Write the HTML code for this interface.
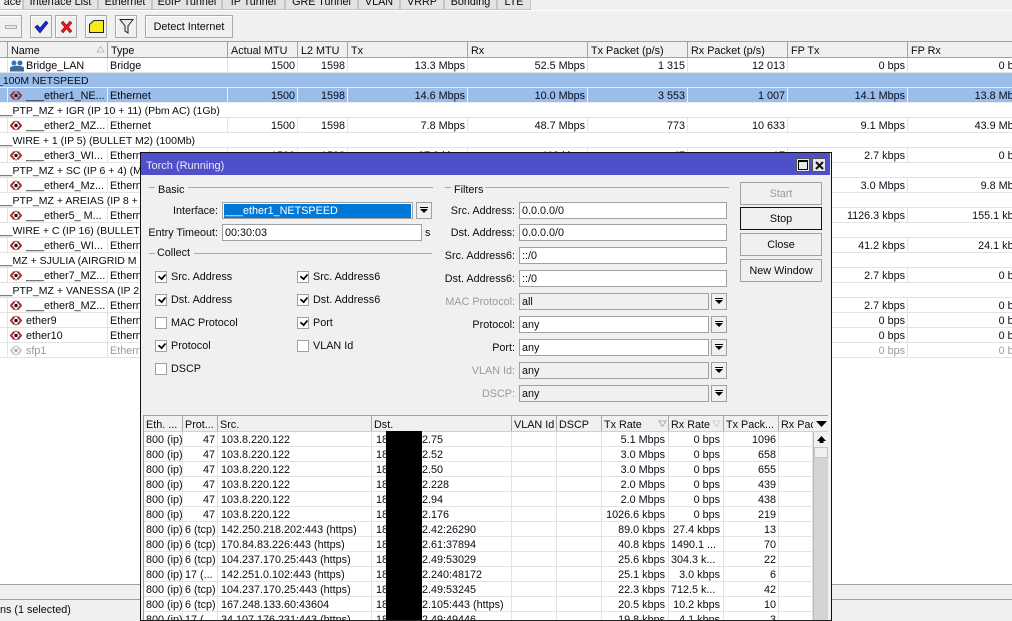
<!DOCTYPE html>
<html><head><meta charset="utf-8"><title>Torch</title>
<style>
html,body{margin:0;padding:0;width:1012px;height:621px;overflow:hidden;background:#fff}
body{font:10.8px/15px "Liberation Sans",sans-serif;color:#0a0a14;position:relative}
div,span,i,svg{box-sizing:border-box}
.a{position:absolute}
.tabs{position:absolute;left:0;top:0;width:1012px;height:11px;background:#f0f0f0;border-bottom:1px solid #fff}
.tab{position:absolute;top:-4px;height:14px;background:#e3e3e3;border:1px solid #c4c4c4;text-align:center;line-height:10px;white-space:nowrap}
.tb{position:absolute;left:0;top:11px;width:1012px;height:31px;background:#f0f0f0}
.btn{position:absolute;top:4px;height:23px;background:#f0f0f0;border:1px solid #a8a8a8;box-shadow:inset 1px 1px 0 #fff;text-align:center;line-height:22px}
.hd{position:absolute;left:0;top:41px;width:1012px;height:17px;background:#f0f0f0;border-top:1px solid #a0a0a0;border-bottom:1px solid #a0a0a0}
.hd span{position:absolute;top:0;height:15px;padding-left:3px;border-left:1px solid #a0a0a0;white-space:nowrap;overflow:hidden;line-height:18px}
.r{position:absolute;left:0;width:1060px;height:15px;border-bottom:1px solid #e3e3e3}
.r i{position:absolute;top:0;height:14px;font-style:normal;border-right:1px solid #e3e3e3;white-space:nowrap;overflow:hidden;text-align:right;line-height:17px;padding-right:2px}
.r i:nth-child(1){left:0;width:8px}
.r i:nth-child(2){left:8px;width:100px;text-align:left;padding-left:18px;overflow:hidden}
.r i:nth-child(3){left:108px;width:120px;text-align:left;padding-left:2px}
.r i:nth-child(4){left:228px;width:70px}
.r i:nth-child(5){left:298px;width:50px}
.r i:nth-child(6){left:348px;width:120px}
.r i:nth-child(7){left:468px;width:120px}
.r i:nth-child(8){left:588px;width:100px}
.r i:nth-child(9){left:688px;width:100px}
.r i:nth-child(10){left:788px;width:120px}
.r i:nth-child(11){left:908px;width:120px}
.r svg{position:absolute;left:2px;top:2px}
.c{position:absolute;left:0;width:1012px;height:15px;border-bottom:1px solid #e3e3e3;white-space:nowrap;line-height:17px;font-size:10.5px}
.c span{position:absolute;left:-5px}
.sel,.sel i{background:#9bbde9;border-color:#e8eef8}
.dim{color:#9a9a9a}
.win{position:absolute;left:140px;top:152px;width:692px;height:480px;background:#f0f0f0;border:1.5px solid #111}
.title{position:absolute;left:141px;top:153px;width:689px;height:22px;background:#4f50c9;color:#e8e8f8;font-size:11px;line-height:26px;padding-left:5px}
.wb{position:absolute;top:158px;width:14px;height:14px;background:#e8e8e8;border:1px solid #555}
.lab{position:absolute;text-align:right;white-space:nowrap;line-height:18px}
.gl{position:absolute;height:1px;background:#a8a8a8}
.gt{position:absolute;line-height:17px}
.in{position:absolute;height:17px;background:#fff;border:1px solid #a0a0a0;padding-left:2px;line-height:17px;white-space:nowrap}
.in.g{background:#f0f0f0}
.dd{position:absolute;left:711px;width:16px;height:17px;background:#f0f0f0;border:1px solid #a0a0a0}
.dd:after{content:"";position:absolute;left:3px;top:4px;width:8px;height:1px;background:#000}
.dd:before{content:"";position:absolute;left:3px;top:6px;width:0;height:0;border:4px solid transparent;border-top:4px solid #000;border-bottom:0}
.cb{position:absolute;width:12px;height:12px;background:#fff;border:1px solid #a0a0a0}
.cb.k:after{content:"";position:absolute;left:2px;top:1px;width:6px;height:4px;border-left:2px solid #000;border-bottom:2px solid #000;transform:rotate(-50deg) scale(.85)}
.cl{position:absolute;white-space:nowrap;line-height:17px}
.bt{position:absolute;left:740px;width:82px;height:23px;background:#f0f0f0;border:1px solid #a0a0a0;text-align:center;line-height:23px}
.list{position:absolute;left:143px;top:415px;width:685px;height:205px;overflow:hidden;background:#fff;border-top:1px solid #a0a0a0;border-left:1px solid #a0a0a0}
.lh{position:absolute;left:0;top:0;width:684px;height:16px;background:#f0f0f0;border-bottom:1px solid #d0d0d0}
.lh span{position:absolute;top:0;height:15px;border-right:1px solid #a8a8a8;padding-left:2px;white-space:nowrap;overflow:hidden;line-height:18px}
.t{position:absolute;left:0;width:669px;height:15px;border-bottom:1px solid #e3e3e3}
.t i{position:absolute;top:0;height:14px;font-style:normal;border-right:1px solid #e3e3e3;white-space:nowrap;overflow:hidden;line-height:16px}
.t i:nth-child(1){left:0;width:39px;padding-left:2px}
.t i:nth-child(2){left:39px;width:35px;padding-left:2px}
.t i:nth-child(3){left:74px;width:154px;padding-left:3px}
.t i:nth-child(4){left:228px;width:140px;padding-left:4px}
.t i:nth-child(5){left:368px;width:45px}
.t i:nth-child(6){left:413px;width:45px}
.t i:nth-child(7){left:458px;width:67px;text-align:right;padding-right:3px}
.t i:nth-child(8){left:525px;width:55px;text-align:right;padding-right:3px}
.t i:nth-child(9){left:580px;width:55px;text-align:right;padding-right:2px}
.t i:nth-child(10){left:635px;width:34px}
.t i.x{text-align:left;padding-left:2px}
.t i u{position:absolute;left:50px;text-decoration:none}
.t i.p{text-align:right;padding-right:2px}
</style></head><body>
<svg width="0" height="0" style="position:absolute"><defs>
<g id="eth"><path d="M4.500 1.500 1 5.500 4.500 9.500M7.500 1.500 11 5.500 7.500 9.500" fill="none" stroke="#ad2a32" stroke-width="2"/><circle cx="6" cy="5.500" r="1.700" fill="#1a1a1a"/><path d="M6 0 7.500 2H4.500ZM6 11 4.500 9H7.500Z" fill="#8d8d8d"/></g>
<g id="ethd"><path d="M4.500 1.500 1 5.500 4.500 9.500M7.500 1.500 11 5.500 7.500 9.500" fill="none" stroke="#c9c9c9" stroke-width="2"/><circle cx="6" cy="5.500" r="1.700" fill="#aaa"/><path d="M6 0 7.500 2H4.500ZM6 11 4.500 9H7.500Z" fill="#ccc"/></g>
</defs></svg>

<div class="tabs">
<div class="tab" style="left:-30px;width:53px;background:#f0f0f0;padding-left:32px">ace</div>
<div class="tab" style="left:23px;width:75px">Interface List</div>
<div class="tab" style="left:98px;width:54px">Ethernet</div>
<div class="tab" style="left:152px;width:70px">EoIP Tunnel</div>
<div class="tab" style="left:222px;width:63px">IP Tunnel</div>
<div class="tab" style="left:285px;width:73px">GRE Tunnel</div>
<div class="tab" style="left:358px;width:42px">VLAN</div>
<div class="tab" style="left:400px;width:44px">VRRP</div>
<div class="tab" style="left:444px;width:53px">Bonding</div>
<div class="tab" style="left:497px;width:34px">LTE</div>
</div>

<div class="tb">
<div class="btn" style="left:-2px;width:24px"><span class="a" style="left:6px;top:9px;width:12px;height:4px;background:#e8e8e8;border:1px solid #b0b0b0"></span></div>
<div class="btn" style="left:30px;width:22px"><svg class="a" style="left:3px;top:4px" width="15" height="14" viewBox="0 0 15 14"><path d="M1 7 3.500 5 6 8 12 1 14 3 6 13Z" fill="#1a28d8" stroke="#0a1070" stroke-width=".6"/></svg></div>
<div class="btn" style="left:55px;width:22px"><svg class="a" style="left:4px;top:4px" width="13" height="14" viewBox="0 0 13 14"><path d="M1 3 3 1 6.500 5 10 1 12 3 8.500 7 12 11 10 13 6.500 9 3 13 1 11 4.500 7Z" fill="#e01818" stroke="#701010" stroke-width=".5"/></svg></div>
<div class="btn" style="left:85px;width:22px"><svg class="a" style="left:3px;top:4px" width="15" height="13" viewBox="0 0 15 13"><path d="M.5 4.500 5 .5H14.500V12.500H.5Z" fill="#f6ec1c" stroke="#222"/></svg></div>
<div class="btn" style="left:115px;width:22px"><svg class="a" style="left:3px;top:2px" width="15" height="17" viewBox="0 0 15 17"><path d="M1 1.500H14L9 8V15L6 13V8Z" fill="#e8e8f0" stroke="#222"/></svg></div>
<div class="btn" style="left:145px;width:88px">Detect Internet</div>
</div>

<div class="hd">
<span style="left:7px;width:100px">Name<svg class="a" style="left:88px;top:4px" width="9" height="7"><path d="M4.500 .5 8 6H1Z" fill="#f4f4f4" stroke="#bbb"/></svg></span>
<span style="left:107px;width:120px">Type</span>
<span style="left:227px;width:70px">Actual MTU</span>
<span style="left:297px;width:50px">L2 MTU</span>
<span style="left:347px;width:120px">Tx</span>
<span style="left:467px;width:120px">Rx</span>
<span style="left:587px;width:100px">Tx Packet (p/s)</span>
<span style="left:687px;width:100px">Rx Packet (p/s)</span>
<span style="left:787px;width:120px">FP Tx</span>
<span style="left:907px;width:105px">FP Rx</span>
</div>

<div class="r" style="top:58px"><i></i><i><svg width="14" height="12" viewBox="0 0 14 12"><circle cx="4" cy="3" r="2.500" fill="#3f73ae"/><circle cx="10" cy="3" r="2.500" fill="#3b6ca8"/><path d="M0 11.500V8C0 5 14 5 14 8V11.500Z" fill="#3a6ba6"/></svg>Bridge_LAN</i><i>Bridge</i><i>1500</i><i>1598</i><i>13.3 Mbps</i><i>52.5 Mbps</i><i>1 315</i><i>12 013</i><i>0 bps</i><i>0 bps</i></div>
<div class="c sel" style="top:73px;width:1012px"><span style="left:-3px">_100M NETSPEED</span></div>
<div class="r sel" style="top:88px"><i></i><i><svg width="12" height="11"><use href="#eth"/></svg>___ether1_NE...</i><i>Ethernet</i><i>1500</i><i>1598</i><i>14.6 Mbps</i><i>10.0 Mbps</i><i>3 553</i><i>1 007</i><i>14.1 Mbps</i><i>13.8 Mbps</i></div>
<div class="c" style="top:103px"><span>___PTP_MZ + IGR (IP 10 + 11) (Pbm AC) (1Gb)</span></div>
<div class="r" style="top:118px"><i></i><i><svg width="12" height="11"><use href="#eth"/></svg>___ether2_MZ...</i><i>Ethernet</i><i>1500</i><i>1598</i><i>7.8 Mbps</i><i>48.7 Mbps</i><i>773</i><i>10 633</i><i>9.1 Mbps</i><i>43.9 Mbps</i></div>
<div class="c" style="top:133px"><span>___WIRE + 1 (IP 5) (BULLET M2) (100Mb)</span></div>
<div class="r" style="top:148px"><i></i><i><svg width="12" height="11"><use href="#eth"/></svg>___ether3_WI...</i><i>Ethernet</i><i>1500</i><i>1598</i><i>27.9 kbps</i><i>112 kbps</i><i>47</i><i>17</i><i>2.7 kbps</i><i>0 bps</i></div>
<div class="c" style="top:163px"><span>___PTP_MZ + SC (IP 6 + 4) (M</span></div>
<div class="r" style="top:178px"><i></i><i><svg width="12" height="11"><use href="#eth"/></svg>___ether4_Mz...</i><i>Ethernet</i><i></i><i></i><i></i><i></i><i></i><i></i><i>3.0 Mbps</i><i>9.8 Mbps</i></div>
<div class="c" style="top:193px"><span>___PTP_MZ + AREIAS (IP 8 +</span></div>
<div class="r" style="top:208px"><i></i><i><svg width="12" height="11"><use href="#eth"/></svg>___ether5_ M...</i><i>Ethernet</i><i></i><i></i><i></i><i></i><i></i><i></i><i>1126.3 kbps</i><i>155.1 kbps</i></div>
<div class="c" style="top:223px"><span>___WIRE + C (IP 16) (BULLET</span></div>
<div class="r" style="top:238px"><i></i><i><svg width="12" height="11"><use href="#eth"/></svg>___ether6_WI...</i><i>Ethernet</i><i></i><i></i><i></i><i></i><i></i><i></i><i>41.2 kbps</i><i>24.1 kbps</i></div>
<div class="c" style="top:253px"><span>___MZ + SJULIA (AIRGRID M</span></div>
<div class="r" style="top:268px"><i></i><i><svg width="12" height="11"><use href="#eth"/></svg>___ether7_MZ...</i><i>Ethernet</i><i></i><i></i><i></i><i></i><i></i><i></i><i>2.7 kbps</i><i>0 bps</i></div>
<div class="c" style="top:283px"><span>___PTP_MZ + VANESSA (IP 2</span></div>
<div class="r" style="top:298px"><i></i><i><svg width="12" height="11"><use href="#eth"/></svg>___ether8_MZ...</i><i>Ethernet</i><i></i><i></i><i></i><i></i><i></i><i></i><i>2.7 kbps</i><i>0 bps</i></div>
<div class="r" style="top:313px"><i></i><i><svg width="12" height="11"><use href="#eth"/></svg>ether9</i><i>Ethernet</i><i></i><i></i><i></i><i></i><i></i><i></i><i>0 bps</i><i>0 bps</i></div>
<div class="r" style="top:328px"><i></i><i><svg width="12" height="11"><use href="#eth"/></svg>ether10</i><i>Ethernet</i><i></i><i></i><i></i><i></i><i></i><i></i><i>0 bps</i><i>0 bps</i></div>
<div class="r dim" style="top:343px"><i></i><i><svg width="12" height="11"><use href="#ethd"/></svg>sfp1</i><i>Ethernet</i><i></i><i></i><i></i><i></i><i></i><i></i><i>0 bps</i><i>0 bps</i></div>

<div class="a" style="left:0;top:584px;width:1012px;height:37px;background:#f0f0f0;border-top:1px solid #a0a0a0"></div>
<div class="a" style="left:0;top:599px;width:1012px;height:1px;background:#a0a0a0"></div>
<div class="a" style="left:0;top:603px;white-space:nowrap">ns (1 selected)</div>

<div class="win"></div>
<div class="title">Torch (Running)</div>
<div class="wb" style="left:796px"><span class="a" style="left:1px;top:1px;width:10px;height:10px;border:1px solid #000;border-top-width:2px"></span></div>
<div class="wb" style="left:812px"><svg class="a" style="left:2px;top:2px" width="9" height="9"><path d="M1 1 8 8M8 1 1 8" stroke="#111" stroke-width="2"/></svg></div>

<div class="gl" style="left:149px;top:187px;width:6px"></div><div class="gt" style="left:158px;top:182px">Basic</div><div class="gl" style="left:188px;top:187px;width:245px"></div>
<div class="lab" style="left:160px;top:202px;width:58px">Interface:</div>
<div class="in" style="left:222px;top:202px;width:191px;padding:1px"><div style="background:#0078d7;color:#fff;height:14px;line-height:15px;padding-left:1px">___ether1_NETSPEED</div></div>
<div class="dd" style="left:416px;top:202px"></div>
<div class="lab" style="left:148px;top:224px;width:70px">Entry Timeout:</div>
<div class="in" style="left:222px;top:224px;width:200px">00:30:03</div>
<div class="gt" style="left:425px;top:225px">s</div>
<div class="gl" style="left:149px;top:253px;width:6px"></div><div class="gt" style="left:157px;top:245px">Collect</div><div class="gl" style="left:194px;top:253px;width:238px"></div>

<div class="cb k" style="left:155px;top:271px"></div><div class="cl" style="left:171px;top:269px">Src. Address</div>
<div class="cb k" style="left:297px;top:271px"></div><div class="cl" style="left:313px;top:269px">Src. Address6</div>
<div class="cb k" style="left:155px;top:294px"></div><div class="cl" style="left:171px;top:292px">Dst. Address</div>
<div class="cb k" style="left:297px;top:294px"></div><div class="cl" style="left:313px;top:292px">Dst. Address6</div>
<div class="cb" style="left:155px;top:317px"></div><div class="cl" style="left:171px;top:315px">MAC Protocol</div>
<div class="cb k" style="left:297px;top:317px"></div><div class="cl" style="left:313px;top:315px">Port</div>
<div class="cb k" style="left:155px;top:340px"></div><div class="cl" style="left:171px;top:338px">Protocol</div>
<div class="cb" style="left:297px;top:340px"></div><div class="cl" style="left:313px;top:338px">VLAN Id</div>
<div class="cb" style="left:155px;top:363px"></div><div class="cl" style="left:171px;top:361px">DSCP</div>

<div class="gl" style="left:445px;top:187px;width:6px"></div><div class="gt" style="left:454px;top:182px">Filters</div><div class="gl" style="left:485px;top:187px;width:244px"></div>
<div class="lab" style="left:430px;top:202px;width:85px">Src. Address:</div><div class="in" style="left:519px;top:202px;width:208px">0.0.0.0/0</div>
<div class="lab" style="left:430px;top:224px;width:85px">Dst. Address:</div><div class="in" style="left:519px;top:224px;width:208px">0.0.0.0/0</div>
<div class="lab" style="left:430px;top:247px;width:85px">Src. Address6:</div><div class="in" style="left:519px;top:247px;width:208px">::/0</div>
<div class="lab" style="left:430px;top:270px;width:85px">Dst. Address6:</div><div class="in" style="left:519px;top:270px;width:208px">::/0</div>
<div class="lab dim" style="left:430px;top:293px;width:85px">MAC Protocol:</div><div class="in g" style="left:519px;top:293px;width:190px">all</div><div class="dd" style="top:293px"></div>
<div class="lab" style="left:430px;top:316px;width:85px">Protocol:</div><div class="in" style="left:519px;top:316px;width:190px">any</div><div class="dd" style="top:316px"></div>
<div class="lab" style="left:430px;top:339px;width:85px">Port:</div><div class="in" style="left:519px;top:339px;width:190px">any</div><div class="dd" style="top:339px"></div>
<div class="lab dim" style="left:430px;top:362px;width:85px">VLAN Id:</div><div class="in g" style="left:519px;top:362px;width:190px">any</div><div class="dd" style="top:362px"></div>
<div class="lab dim" style="left:430px;top:385px;width:85px">DSCP:</div><div class="in g" style="left:519px;top:385px;width:190px">any</div><div class="dd" style="top:385px"></div>

<div class="bt dim" style="top:182px">Start</div>
<div class="bt" style="top:207px;border-color:#111;border-width:1.5px">Stop</div>
<div class="bt" style="top:233px">Close</div>
<div class="bt" style="top:259px">New Window</div>

<div class="list">
<div class="lh">
<span style="left:0;width:39px">Eth. ...</span><span style="left:39px;width:35px">Prot...</span><span style="left:74px;width:154px">Src.</span><span style="left:228px;width:140px">Dst.</span><span style="left:368px;width:45px">VLAN Id</span><span style="left:413px;width:45px">DSCP</span><span style="left:458px;width:67px">Tx Rate<svg class="a" style="left:56px;top:4px" width="9" height="7"><path d="M4.500 6.500 8 1H1Z" fill="#f4f4f4" stroke="#aaa"/></svg></span><span style="left:525px;width:55px">Rx Rate<svg class="a" style="left:43px;top:4px" width="9" height="7"><path d="M4.500 6.500 8 1H1Z" fill="#f4f4f4" stroke="#ccc"/></svg></span><span style="left:580px;width:55px">Tx Pack...</span><span style="left:635px;width:34px;border-right:0">Rx Pac</span>
<svg class="a" style="left:672px;top:5px" width="11" height="6"><path d="M0 0H11L5.500 6Z" fill="#000"/></svg>
</div>
<div class="t" style="top:16px"><i>800 (ip)</i><i class="p">47</i><i>103.8.220.122</i><i>18<u>2.75</u></i><i></i><i></i><i>5.1 Mbps</i><i>0 bps</i><i>1096</i><i></i></div>
<div class="t" style="top:31px"><i>800 (ip)</i><i class="p">47</i><i>103.8.220.122</i><i>18<u>2.52</u></i><i></i><i></i><i>3.0 Mbps</i><i>0 bps</i><i>658</i><i></i></div>
<div class="t" style="top:46px"><i>800 (ip)</i><i class="p">47</i><i>103.8.220.122</i><i>18<u>2.50</u></i><i></i><i></i><i>3.0 Mbps</i><i>0 bps</i><i>655</i><i></i></div>
<div class="t" style="top:61px"><i>800 (ip)</i><i class="p">47</i><i>103.8.220.122</i><i>18<u>2.228</u></i><i></i><i></i><i>2.0 Mbps</i><i>0 bps</i><i>439</i><i></i></div>
<div class="t" style="top:76px"><i>800 (ip)</i><i class="p">47</i><i>103.8.220.122</i><i>18<u>2.94</u></i><i></i><i></i><i>2.0 Mbps</i><i>0 bps</i><i>438</i><i></i></div>
<div class="t" style="top:91px"><i>800 (ip)</i><i class="p">47</i><i>103.8.220.122</i><i>18<u>2.176</u></i><i></i><i></i><i>1026.6 kbps</i><i>0 bps</i><i>219</i><i></i></div>
<div class="t" style="top:106px"><i>800 (ip)</i><i>6 (tcp)</i><i>142.250.218.202:443 (https)</i><i>18<u>2.42:26290</u></i><i></i><i></i><i>89.0 kbps</i><i>27.4 kbps</i><i>13</i><i></i></div>
<div class="t" style="top:121px"><i>800 (ip)</i><i>6 (tcp)</i><i>170.84.83.226:443 (https)</i><i>18<u>2.61:37894</u></i><i></i><i></i><i>40.8 kbps</i><i class="x">1490.1 ...</i><i>70</i><i></i></div>
<div class="t" style="top:136px"><i>800 (ip)</i><i>6 (tcp)</i><i>104.237.170.25:443 (https)</i><i>18<u>2.49:53029</u></i><i></i><i></i><i>25.6 kbps</i><i class="x">304.3 k...</i><i>22</i><i></i></div>
<div class="t" style="top:151px"><i>800 (ip)</i><i>17 (...</i><i>142.251.0.102:443 (https)</i><i>18<u>2.240:48172</u></i><i></i><i></i><i>25.1 kbps</i><i>3.0 kbps</i><i>6</i><i></i></div>
<div class="t" style="top:166px"><i>800 (ip)</i><i>6 (tcp)</i><i>104.237.170.25:443 (https)</i><i>18<u>2.49:53245</u></i><i></i><i></i><i>22.3 kbps</i><i class="x">712.5 k...</i><i>42</i><i></i></div>
<div class="t" style="top:181px"><i>800 (ip)</i><i>6 (tcp)</i><i>167.248.133.60:43604</i><i>18<u>2.105:443 (https)</u></i><i></i><i></i><i>20.5 kbps</i><i>10.2 kbps</i><i>10</i><i></i></div>
<div class="t" style="top:196px"><i>800 (ip)</i><i>17 (...</i><i>34.107.176.231:443 (https)</i><i>18<u>2.49:49446</u></i><i></i><i></i><i>19.8 kbps</i><i>4.1 kbps</i><i>3</i><i></i></div>
<div class="a" style="left:669px;top:16px;width:15px;height:190px;background:#d4d4d4;border-left:1px solid #bbb"></div>
<div class="a" style="left:670px;top:16px;width:14px;height:15px;background:#f0f0f0"><svg class="a" style="left:3px;top:4px" width="9" height="8"><path d="M4.500 0 9 5H6.500V7H2.500V5H0Z" fill="#000"/></svg></div>
<div class="a" style="left:670px;top:31px;width:14px;height:11px;background:#f0f0f0;border:1px solid #c4c4c4"></div>
</div>
<div class="a" style="left:386px;top:431px;width:36px;height:190px;background:#000"></div>
<div class="a" style="left:141px;top:620px;width:690px;height:1px;background:#222"></div>
</body></html>
